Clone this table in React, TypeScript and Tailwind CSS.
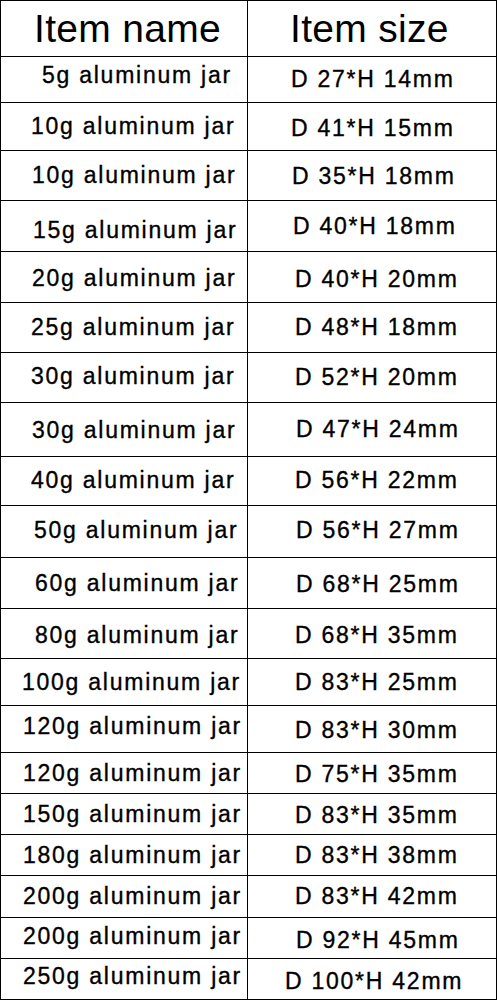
const header = { h: "h-[56px]" };

const rows = [
  { name: "5g aluminum jar", size: "D 27*H 14mm", h: "h-[46px]", l: "pl-[41px] pb-[9px]", r: "pl-[43px]" },
  { name: "10g aluminum jar", size: "D 41*H 15mm", h: "h-[48px]", l: "pl-[30px]", r: "pl-[43px] pt-[3px]" },
  { name: "10g aluminum jar", size: "D 35*H 18mm", h: "h-[50px]", l: "pl-[31px]", r: "pl-[44px] pt-[2px]" },
  { name: "15g aluminum jar", size: "D 40*H 18mm", h: "h-[51px]", l: "pl-[32px] pt-[8px]", r: "pl-[45px]" },
  { name: "20g aluminum jar", size: "D 40*H 20mm", h: "h-[51px]", l: "pl-[31px] pt-[3px]", r: "pl-[47px] pt-[5px]" },
  { name: "25g aluminum jar", size: "D 48*H 18mm", h: "h-[50px]", l: "pl-[30px]", r: "pl-[47px]" },
  { name: "30g aluminum jar", size: "D 52*H 20mm", h: "h-[50px]", l: "pl-[30px] pb-[2px]", r: "pl-[47px]" },
  { name: "30g aluminum jar", size: "D 47*H 24mm", h: "h-[54px]", l: "pl-[31px] pt-[2px]", r: "pl-[48px]" },
  { name: "40g aluminum jar", size: "D 56*H 22mm", h: "h-[49px]", l: "pl-[30px] pb-[2px]", r: "pl-[47px] pb-[2px]" },
  { name: "50g aluminum jar", size: "D 56*H 27mm", h: "h-[52px]", l: "pl-[33px] pb-[3px]", r: "pl-[48px] pb-[3px]" },
  { name: "60g aluminum jar", size: "D 68*H 25mm", h: "h-[51px]", l: "pl-[34px]", r: "pl-[48px] pt-[3px]" },
  { name: "80g aluminum jar", size: "D 68*H 35mm", h: "h-[50px]", l: "pl-[34px] pt-[3px]", r: "pl-[47px] pt-[3px]" },
  { name: "100g aluminum jar", size: "D 83*H 25mm", h: "h-[47px]", l: "pl-[21px]", r: "pl-[47px]" },
  { name: "120g aluminum jar", size: "D 83*H 30mm", h: "h-[47px]", l: "pl-[22px] pb-[5px]", r: "pl-[47px] pt-[2px]" },
  { name: "120g aluminum jar", size: "D 75*H 35mm", h: "h-[41px]", l: "pl-[22px]", r: "pl-[47px] pt-[3px]" },
  { name: "150g aluminum jar", size: "D 83*H 35mm", h: "h-[41px]", l: "pl-[22px]", r: "pl-[47px] pt-[2px]" },
  { name: "180g aluminum jar", size: "D 83*H 38mm", h: "h-[41px]", l: "pl-[22px]", r: "pl-[47px]" },
  { name: "200g aluminum jar", size: "D 83*H 42mm", h: "h-[42px]", l: "pl-[22px]", r: "pl-[47px]" },
  { name: "200g aluminum jar", size: "D 92*H 45mm", h: "h-[41px]", l: "pl-[22px] pb-[3px]", r: "pl-[48px] pt-[4px]" },
  { name: "250g aluminum jar", size: "D 100*H 42mm", h: "h-[41px]", l: "pl-[22px] pb-[5px]", r: "pl-[37px] pt-[5px]" },
];

export default function App() {
  return (
    <div className="h-[1000px] w-[500px] bg-white font-['Liberation_Sans',Arial,sans-serif] text-black">
      <div className="flex w-[497px] flex-col border-t border-r border-l border-black">

        {/* Header */}

        <div className={`grid grid-cols-[247px_1fr] border-b border-black ${header.h}`}>
          <div className="flex items-center border-r border-black pl-[33px] text-[39px] leading-none tracking-[0.3px]">
            Item name
          </div>
          <div className="flex items-center pl-[42px] text-[39px] leading-none tracking-[0.3px]">
            Item size
          </div>
        </div>

        {/* Rows */}

        {rows.map((row, i) => (
          <div
            key={i}
            className={`grid grid-cols-[247px_1fr] border-b border-black ${row.h}`}
          >
            <div
              className={`flex items-center whitespace-nowrap border-r border-black text-[23px] leading-none tracking-[1.75px] [-webkit-text-stroke:0.35px_black] ${row.l}`}
            >
              {row.name}
            </div>
            <div
              className={`flex items-center whitespace-nowrap text-[23px] leading-none tracking-[1.75px] [-webkit-text-stroke:0.35px_black] ${row.r}`}
            >
              {row.size}
            </div>
          </div>
        ))}

      </div>
    </div>
  );
}
